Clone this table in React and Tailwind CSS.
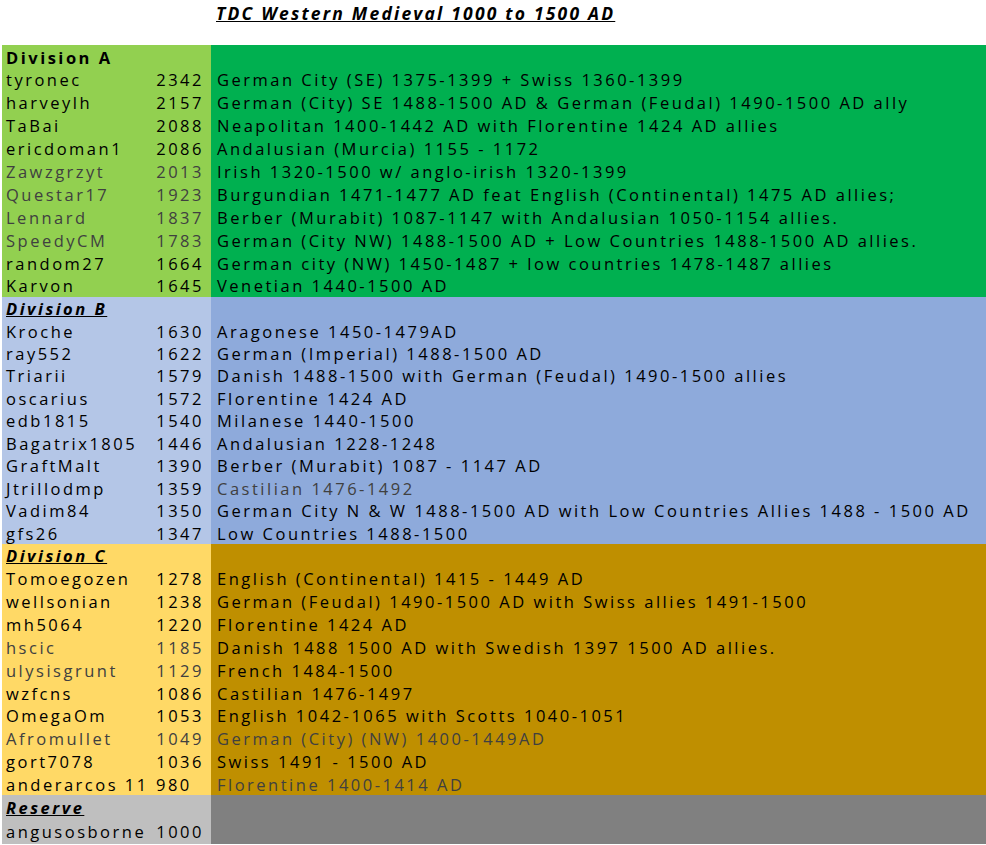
import React from "react";

const G = "text-[#404040]";

const sections = [
  {
    title: "Division A",
    headerStyle: "font-bold",
    left: "bg-[#92d050]",
    right: "bg-[#00b050]",
    rowH: "h-[22.9px]",
    rows: [
      ["tyronec", "2342", "German City (SE) 1375-1399 + Swiss 1360-1399"],
      ["harveylh", "2157", "German (City) SE 1488-1500 AD & German (Feudal) 1490-1500 AD ally"],
      ["TaBai", "2088", "Neapolitan 1400-1442 AD with Florentine 1424 AD allies"],
      ["ericdoman1", "2086", "Andalusian (Murcia) 1155 - 1172"],
      ["Zawzgrzyt", "2013", "Irish 1320-1500 w/ anglo-irish 1320-1399", true, false],
      ["Questar17", "1923", "Burgundian 1471-1477 AD feat English (Continental) 1475 AD allies;", true, false],
      ["Lennard", "1837", "Berber (Murabit) 1087-1147 with Andalusian 1050-1154 allies.", true, false],
      ["SpeedyCM", "1783", "German (City NW) 1488-1500 AD + Low Countries 1488-1500 AD allies.", true, false],
      ["random27", "1664", "German city (NW) 1450-1487 + low countries 1478-1487 allies"],
      ["Karvon", "1645", "Venetian 1440-1500 AD"],
    ],
  },
  {
    title: "Division B",
    headerStyle: "font-bold italic underline",
    left: "bg-[#b4c6e7]",
    right: "bg-[#8eaadb]",
    rowH: "h-[22.45px]",
    rows: [
      ["Kroche", "1630", "Aragonese 1450-1479AD"],
      ["ray552", "1622", "German (Imperial) 1488-1500 AD"],
      ["Triarii", "1579", "Danish 1488-1500 with German (Feudal) 1490-1500 allies"],
      ["oscarius", "1572", "Florentine 1424 AD"],
      ["edb1815", "1540", "Milanese 1440-1500"],
      ["Bagatrix1805", "1446", "Andalusian 1228-1248"],
      ["GraftMalt", "1390", "Berber (Murabit) 1087 - 1147 AD"],
      ["Jtrillodmp", "1359", "Castilian 1476-1492", false, true],
      ["Vadim84", "1350", "German City N & W 1488-1500 AD with Low Countries Allies 1488 - 1500 AD"],
      ["gfs26", "1347", "Low Countries 1488-1500"],
    ],
  },
  {
    title: "Division C",
    headerStyle: "font-bold italic underline",
    left: "bg-[#ffd966]",
    right: "bg-[#bf8f00]",
    rowH: "h-[22.9px]",
    rows: [
      ["Tomoegozen", "1278", "English (Continental) 1415 - 1449 AD"],
      ["wellsonian", "1238", "German (Feudal) 1490-1500 AD with Swiss allies 1491-1500"],
      ["mh5064", "1220", "Florentine 1424 AD"],
      ["hscic", "1185", "Danish 1488 1500 AD with Swedish 1397 1500 AD allies.", true, false],
      ["ulysisgrunt", "1129", "French 1484-1500", true, false],
      ["wzfcns", "1086", "Castilian 1476-1497"],
      ["OmegaOm", "1053", "English 1042-1065 with Scotts 1040-1051"],
      ["Afromullet", "1049", "German (City) (NW) 1400-1449AD", true, true],
      ["gort7078", "1036", "Swiss 1491 - 1500 AD"],
      ["anderarcos 11", "980", "Florentine 1400-1414 AD", false, true, true],
    ],
  },
  {
    title: "Reserve",
    headerStyle: "font-bold italic underline",
    left: "bg-[#bfbfbf]",
    right: "bg-[#808080]",
    rowH: "h-[22.9px]",
    rows: [["angusosborne", "1000", ""]],
  },
];

function Row({ h, left, right, children, desc }) {
  return (
    <div className={`flex ${h}`}>
      <div className={`w-[209px] shrink-0 ${left} flex items-center pt-[3px]`}>{children}</div>
      <div className={`flex-1 ${right} flex items-center pt-[3px] pl-[6px] whitespace-nowrap overflow-hidden`}>{desc}</div>
    </div>
  );
}

export default function App() {
  return (
    <div
      className="w-[986px] h-[845px] overflow-hidden bg-white text-black text-[16.5px] tracking-[2.5px]"
      style={{ fontFamily: '"Open Sans", sans-serif' }}
    >
      <div className="h-[45px] flex">
        <div className="w-[211px] shrink-0" />
        <div className="pl-[5px] pt-[1px] text-[17.5px] font-bold italic underline leading-[24px] tracking-[2.2px]">
          TDC Western Medieval 1000 to 1500 AD
        </div>
      </div>
      <div className="pl-[2px]">
        {sections.map((s) => (
          <div key={s.title}>
            <Row h={s.rowH} left={s.left} right={s.right} desc="">
              <span className={`pl-[4px] ${s.headerStyle}`}>{s.title}</span>
            </Row>
            {s.rows.map(([name, num, desc, grayL, grayR, leftNum]) => (
              <Row
                key={name}
                h={s.title === "Reserve" ? "h-[26px]" : s.rowH}
                left={s.left}
                right={s.right}
                desc={<span className={grayR ? G : ""}>{desc}</span>}
              >
                <div className={`flex w-full items-center ${grayL ? G : ""}`}>
                  <span className="w-[152px] shrink-0 pl-[4px] whitespace-nowrap">{name}</span>
                  <span className={`flex-1 whitespace-nowrap ${leftNum ? "text-left pl-[2px]" : "text-right pr-[7px]"}`}>
                    {num}
                  </span>
                </div>
              </Row>
            ))}
          </div>
        ))}
      </div>
    </div>
  );
}
